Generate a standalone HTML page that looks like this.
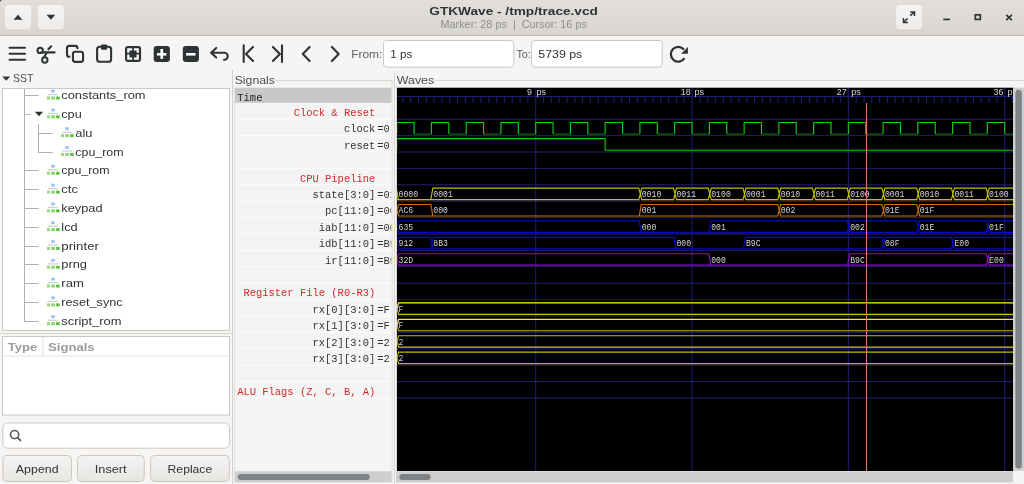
<!DOCTYPE html>
<html><head><meta charset="utf-8">
<style>
*{margin:0;padding:0}
html,body{width:1024px;height:484px;overflow:hidden;background:#f6f5f4}
svg{position:absolute;left:0;top:0;will-change:transform}
text{font-family:"Liberation Sans",sans-serif;white-space:pre}
.m{font-family:"Liberation Mono",monospace}
</style></head><body>
<svg width="1024" height="484" viewBox="0 0 1024 484" fill="#2e3436">
<defs>
<linearGradient id="hg" x1="0" y1="0" x2="0" y2="1"><stop offset="0" stop-color="#e2dfdb"/><stop offset="1" stop-color="#d9d5d1"/></linearGradient>
<linearGradient id="bg" x1="0" y1="0" x2="0" y2="1"><stop offset="0" stop-color="#f6f5f4"/><stop offset="1" stop-color="#edebe9"/></linearGradient>
<linearGradient id="btg" x1="0" y1="0" x2="0" y2="1"><stop offset="0" stop-color="#f4f3f2"/><stop offset="1" stop-color="#e8e6e3"/></linearGradient>
</defs>
<rect width="1024" height="484" fill="#f6f5f4"/>

<rect x="0" y="0" width="1024" height="35" fill="url(#hg)"/>
<rect x="0" y="35" width="1024" height="1" fill="#bfb8b1"/>
<path d="M0 0 H2.2 A2.2 2.2 0 0 0 0 2.2 Z" fill="#1a1a1a"/>
<rect x="5" y="5.6" width="26.2" height="25" rx="4" fill="#cfcac5" opacity="0.6"/>
<rect x="5" y="5" width="26.2" height="24.8" rx="4" fill="url(#bg)"/>
<rect x="37.8" y="5.6" width="26.2" height="25" rx="4" fill="#cfcac5" opacity="0.6"/>
<rect x="37.8" y="5" width="26.2" height="24.8" rx="4" fill="url(#bg)"/>
<rect x="896" y="5.6" width="26.2" height="25" rx="4" fill="#cfcac5" opacity="0.6"/>
<rect x="896" y="5" width="26.2" height="24.8" rx="4" fill="url(#bg)"/>
<path d="M13.5 19.7 L18 14.8 L22.5 19.7 Z" fill="#2e3436"/>
<path d="M46.5 14.8 L55.3 14.8 L50.9 19.7 Z" fill="#2e3436"/>
<g stroke="#2e3436" stroke-width="1.6" fill="none">
<path d="M910.3 15.8 L914.3 11.9" stroke-width="1.5"/><path d="M910.2 11.9 H914.5 V16.1" stroke-width="1.5"/>
<path d="M903.6 22.3 L907.6 18.5" stroke-width="1.5"/><path d="M903.5 18.1 V22.4 H907.9" stroke-width="1.5"/>
<path d="M943.3 19.4 H949.9" stroke-width="1.7"/>
<rect x="975.3" y="14.8" width="5" height="4.6" stroke-width="1.7"/>
<path d="M1006.2 14.8 L1011.9 20.2 M1011.9 14.8 L1006.2 20.2" stroke-width="1.6"/>
</g>
<text x="429.3" y="14.8" font-size="10.9" font-weight="bold" textLength="168.6" lengthAdjust="spacingAndGlyphs">GTKWave - /tmp/trace.vcd</text>
<text x="440.5" y="27.6" font-size="10.6" fill="#8b8e8f" textLength="146.4" lengthAdjust="spacingAndGlyphs">Marker: 28 ps  |  Cursor: 16 ps</text>
<g fill="none" stroke="#2e3436" stroke-width="2" stroke-linecap="round" stroke-linejoin="round">
<path d="M9.6 47.8 H25 M9.6 53.8 H25 M9.6 59.7 H25" stroke-linecap="round" stroke-width="2.1"/>
<circle cx="40.2" cy="50.4" r="2.7" stroke-width="2"/>
<circle cx="44.8" cy="60" r="2.7" stroke-width="2"/>
<path d="M41.5 52.4 H54.6" stroke-width="2.1"/>
<path d="M48.4 49.3 L51.2 46.3" stroke-width="2"/>
<path d="M43.8 57.2 L46.3 53.6" stroke-width="2"/>
<path d="M69.4 56.8 Q67 56.8 67 54.4 V48.3 Q67 45.9 69.4 45.9 H75.1 Q77.5 45.9 77.5 48.2" stroke-width="2.1"/>
<rect x="72.9" y="51.7" width="10.2" height="10.2" rx="2.4" stroke-width="2.1"/>
<rect x="97.1" y="46.8" width="14" height="15" rx="2.6" stroke-width="2.1"/>
<path d="M216.2 47.9 L211.1 52.7 L216.2 57.5 M211.5 52.7 H224.2 A3.55 3.55 0 0 1 224.2 59.8 H224" stroke-width="2.1"/>
<path d="M243.7 45.4 V61.9 M253 46.9 L246 53.9 L253 61" stroke-width="2.1"/>
<path d="M282 45.4 V61.9 M272.9 46.9 L279.9 53.9 L272.9 61" stroke-width="2.1"/>
<path d="M309.6 46.9 L302.8 53.9 L309.6 61" stroke-width="2.1"/>
<path d="M331.9 46.9 L338.7 53.9 L331.9 61" stroke-width="2.1"/>
<path d="M684.5 58.2 A7.4 7.4 0 1 1 684 49.6" stroke-width="2.3" stroke-linecap="butt"/>
</g>
<g fill="#2e3436">
<rect x="101" y="44.6" width="6.2" height="5.2" rx="1"/>
<rect x="125" y="46" width="16.1" height="15.9" rx="3"/>
<rect x="153.7" y="45.9" width="16.2" height="16.1" rx="3"/>
<rect x="182.8" y="45.9" width="16.1" height="16.1" rx="3"/>
<path d="M687.9 47 V53.7 H681.1 Z"/>
</g>
<g fill="#fff">
<path d="M127.2 48.2 H132.2 V50.4 H129.4 V52.7 H127.2 Z M133.9 48.2 H138.8 V52.7 H136.6 V50.4 H133.9 Z M127.2 54.4 H129.4 V57.4 H132.2 V59.7 H127.2 Z M138.8 54.4 V59.7 H133.9 V57.4 H136.6 V54.4 Z"/>
<rect x="157" y="53" width="9.4" height="2.6"/>
<rect x="160.4" y="49" width="2.7" height="9.9"/>
<rect x="186.1" y="53" width="9.4" height="2.6"/>
</g>
<text x="351.2" y="57.9" font-size="11" fill="#5d6163" textLength="31.2" lengthAdjust="spacingAndGlyphs">From:</text>
<rect x="383.5" y="40.5" width="130.3" height="26.6" rx="3" fill="#fff" stroke="#cdc7c2"/>
<text x="390.3" y="57.9" font-size="11" textLength="22" lengthAdjust="spacingAndGlyphs">1 ps</text>
<text x="516.4" y="57.9" font-size="11" fill="#5d6163" textLength="14.4" lengthAdjust="spacingAndGlyphs">To:</text>
<rect x="531.6" y="40.5" width="130.6" height="26.6" rx="3" fill="#fff" stroke="#cdc7c2"/>
<text x="538.3" y="57.9" font-size="11" textLength="44" lengthAdjust="spacingAndGlyphs">5739 ps</text>
<path d="M2.2 76.6 H10.2 L6.2 80.8 Z" fill="#2e3436"/>
<text x="13" y="82.2" font-size="11" fill="#4b4f51" textLength="20.6" lengthAdjust="spacingAndGlyphs">SST</text>
<rect x="2.5" y="88.5" width="227" height="242" fill="#fff" stroke="#cdc7c2"/>
<rect x="24" y="89" width="1" height="233.0" fill="#b0b0b0"/>
<rect x="24" y="95.0" width="14.6" height="1" fill="#b0b0b0"/>
<g transform="translate(47,89.65)"><rect x="4.1" y="0" width="3.8" height="2.9" fill="#a3c6f0"/><rect x="1" y="4.4" width="9.9" height="1.2" fill="#cfcfcf"/><rect x="0" y="6.9" width="3" height="3" fill="#9ad97f"/><rect x="4.3" y="6.9" width="3.6" height="3" fill="#8ad56e"/><rect x="9.1" y="6.9" width="3.6" height="3" fill="#5fbf42"/></g>
<rect x="24" y="114.0" width="6.5" height="1" fill="#b0b0b0"/>
<path d="M34.8 111.8 H43.2 L39 116.2 Z" fill="#2e3436"/>
<g transform="translate(47,108.45)"><rect x="4.1" y="0" width="3.8" height="2.9" fill="#a3c6f0"/><rect x="1" y="4.4" width="9.9" height="1.2" fill="#cfcfcf"/><rect x="0" y="6.9" width="3" height="3" fill="#9ad97f"/><rect x="4.3" y="6.9" width="3.6" height="3" fill="#8ad56e"/><rect x="9.1" y="6.9" width="3.6" height="3" fill="#5fbf42"/></g>
<rect x="38" y="133.0" width="14.7" height="1" fill="#b0b0b0"/>
<g transform="translate(61,127.25000000000001)"><rect x="4.1" y="0" width="3.8" height="2.9" fill="#a3c6f0"/><rect x="1" y="4.4" width="9.9" height="1.2" fill="#cfcfcf"/><rect x="0" y="6.9" width="3" height="3" fill="#9ad97f"/><rect x="4.3" y="6.9" width="3.6" height="3" fill="#8ad56e"/><rect x="9.1" y="6.9" width="3.6" height="3" fill="#5fbf42"/></g>
<rect x="38" y="152.0" width="14.7" height="1" fill="#b0b0b0"/>
<g transform="translate(61,146.05)"><rect x="4.1" y="0" width="3.8" height="2.9" fill="#a3c6f0"/><rect x="1" y="4.4" width="9.9" height="1.2" fill="#cfcfcf"/><rect x="0" y="6.9" width="3" height="3" fill="#9ad97f"/><rect x="4.3" y="6.9" width="3.6" height="3" fill="#8ad56e"/><rect x="9.1" y="6.9" width="3.6" height="3" fill="#5fbf42"/></g>
<rect x="24" y="170.0" width="14.6" height="1" fill="#b0b0b0"/>
<g transform="translate(47,164.85)"><rect x="4.1" y="0" width="3.8" height="2.9" fill="#a3c6f0"/><rect x="1" y="4.4" width="9.9" height="1.2" fill="#cfcfcf"/><rect x="0" y="6.9" width="3" height="3" fill="#9ad97f"/><rect x="4.3" y="6.9" width="3.6" height="3" fill="#8ad56e"/><rect x="9.1" y="6.9" width="3.6" height="3" fill="#5fbf42"/></g>
<rect x="24" y="189.0" width="14.6" height="1" fill="#b0b0b0"/>
<g transform="translate(47,183.64999999999998)"><rect x="4.1" y="0" width="3.8" height="2.9" fill="#a3c6f0"/><rect x="1" y="4.4" width="9.9" height="1.2" fill="#cfcfcf"/><rect x="0" y="6.9" width="3" height="3" fill="#9ad97f"/><rect x="4.3" y="6.9" width="3.6" height="3" fill="#8ad56e"/><rect x="9.1" y="6.9" width="3.6" height="3" fill="#5fbf42"/></g>
<rect x="24" y="208.0" width="14.6" height="1" fill="#b0b0b0"/>
<g transform="translate(47,202.45)"><rect x="4.1" y="0" width="3.8" height="2.9" fill="#a3c6f0"/><rect x="1" y="4.4" width="9.9" height="1.2" fill="#cfcfcf"/><rect x="0" y="6.9" width="3" height="3" fill="#9ad97f"/><rect x="4.3" y="6.9" width="3.6" height="3" fill="#8ad56e"/><rect x="9.1" y="6.9" width="3.6" height="3" fill="#5fbf42"/></g>
<rect x="24" y="227.0" width="14.6" height="1" fill="#b0b0b0"/>
<g transform="translate(47,221.25)"><rect x="4.1" y="0" width="3.8" height="2.9" fill="#a3c6f0"/><rect x="1" y="4.4" width="9.9" height="1.2" fill="#cfcfcf"/><rect x="0" y="6.9" width="3" height="3" fill="#9ad97f"/><rect x="4.3" y="6.9" width="3.6" height="3" fill="#8ad56e"/><rect x="9.1" y="6.9" width="3.6" height="3" fill="#5fbf42"/></g>
<rect x="24" y="246.0" width="14.6" height="1" fill="#b0b0b0"/>
<g transform="translate(47,240.05)"><rect x="4.1" y="0" width="3.8" height="2.9" fill="#a3c6f0"/><rect x="1" y="4.4" width="9.9" height="1.2" fill="#cfcfcf"/><rect x="0" y="6.9" width="3" height="3" fill="#9ad97f"/><rect x="4.3" y="6.9" width="3.6" height="3" fill="#8ad56e"/><rect x="9.1" y="6.9" width="3.6" height="3" fill="#5fbf42"/></g>
<rect x="24" y="264.0" width="14.6" height="1" fill="#b0b0b0"/>
<g transform="translate(47,258.85)"><rect x="4.1" y="0" width="3.8" height="2.9" fill="#a3c6f0"/><rect x="1" y="4.4" width="9.9" height="1.2" fill="#cfcfcf"/><rect x="0" y="6.9" width="3" height="3" fill="#9ad97f"/><rect x="4.3" y="6.9" width="3.6" height="3" fill="#8ad56e"/><rect x="9.1" y="6.9" width="3.6" height="3" fill="#5fbf42"/></g>
<rect x="24" y="283.0" width="14.6" height="1" fill="#b0b0b0"/>
<g transform="translate(47,277.65)"><rect x="4.1" y="0" width="3.8" height="2.9" fill="#a3c6f0"/><rect x="1" y="4.4" width="9.9" height="1.2" fill="#cfcfcf"/><rect x="0" y="6.9" width="3" height="3" fill="#9ad97f"/><rect x="4.3" y="6.9" width="3.6" height="3" fill="#8ad56e"/><rect x="9.1" y="6.9" width="3.6" height="3" fill="#5fbf42"/></g>
<rect x="24" y="302.0" width="14.6" height="1" fill="#b0b0b0"/>
<g transform="translate(47,296.45)"><rect x="4.1" y="0" width="3.8" height="2.9" fill="#a3c6f0"/><rect x="1" y="4.4" width="9.9" height="1.2" fill="#cfcfcf"/><rect x="0" y="6.9" width="3" height="3" fill="#9ad97f"/><rect x="4.3" y="6.9" width="3.6" height="3" fill="#8ad56e"/><rect x="9.1" y="6.9" width="3.6" height="3" fill="#5fbf42"/></g>
<rect x="24" y="321.0" width="14.6" height="1" fill="#b0b0b0"/>
<g transform="translate(47,315.25)"><rect x="4.1" y="0" width="3.8" height="2.9" fill="#a3c6f0"/><rect x="1" y="4.4" width="9.9" height="1.2" fill="#cfcfcf"/><rect x="0" y="6.9" width="3" height="3" fill="#9ad97f"/><rect x="4.3" y="6.9" width="3.6" height="3" fill="#8ad56e"/><rect x="9.1" y="6.9" width="3.6" height="3" fill="#5fbf42"/></g>
<text x="61.3" y="99.15" font-size="11.6" textLength="84.2" lengthAdjust="spacingAndGlyphs">constants_rom</text>
<text x="61.3" y="117.95" font-size="11.6" textLength="20.4" lengthAdjust="spacingAndGlyphs">cpu</text>
<text x="75.3" y="136.75" font-size="11.6" textLength="17.2" lengthAdjust="spacingAndGlyphs">alu</text>
<text x="75.3" y="155.55" font-size="11.6" textLength="48.3" lengthAdjust="spacingAndGlyphs">cpu_rom</text>
<text x="61.3" y="174.35" font-size="11.6" textLength="48.3" lengthAdjust="spacingAndGlyphs">cpu_rom</text>
<text x="61.3" y="193.15" font-size="11.6" textLength="16.6" lengthAdjust="spacingAndGlyphs">ctc</text>
<text x="61.3" y="211.95" font-size="11.6" textLength="41.2" lengthAdjust="spacingAndGlyphs">keypad</text>
<text x="61.3" y="230.75" font-size="11.6" textLength="16.3" lengthAdjust="spacingAndGlyphs">lcd</text>
<text x="61.3" y="249.55" font-size="11.6" textLength="37.7" lengthAdjust="spacingAndGlyphs">printer</text>
<text x="61.3" y="268.35" font-size="11.6" textLength="25.7" lengthAdjust="spacingAndGlyphs">prng</text>
<text x="61.3" y="287.15" font-size="11.6" textLength="22.5" lengthAdjust="spacingAndGlyphs">ram</text>
<text x="61.3" y="305.95" font-size="11.6" textLength="61.4" lengthAdjust="spacingAndGlyphs">reset_sync</text>
<text x="61.3" y="324.75" font-size="11.6" textLength="60.2" lengthAdjust="spacingAndGlyphs">script_rom</text>
<rect x="38" y="124" width="1" height="29" fill="#b0b0b0"/>
<rect x="0" y="333" width="232" height="1" fill="#d8d4cf"/>
<rect x="232" y="70" width="1" height="414" fill="#d3cfca"/>
<rect x="2.5" y="336.5" width="227" height="78.5" fill="#fff" stroke="#cdc7c2"/>
<rect x="3" y="355.5" width="226" height="1" fill="#e4e1de"/>
<rect x="42.3" y="337" width="1" height="19" fill="#e4e1de"/>
<text x="7.8" y="350.6" font-size="11" font-weight="bold" fill="#9a9c9d" textLength="29.6" lengthAdjust="spacingAndGlyphs">Type</text>
<text x="48" y="350.6" font-size="11" font-weight="bold" fill="#9a9c9d" textLength="46.6" lengthAdjust="spacingAndGlyphs">Signals</text>
<rect x="2.8" y="423" width="226.8" height="25.2" rx="5" fill="#fff" stroke="#cdc7c2"/>
<circle cx="14.6" cy="434.6" r="4.1" fill="none" stroke="#555a5c" stroke-width="1.6"/>
<path d="M17.6 437.6 L20.4 440.3" stroke="#555a5c" stroke-width="1.8" stroke-linecap="round"/>
<rect x="2.8" y="455.5" width="68.7" height="26" rx="4" fill="url(#btg)" stroke="#cdc7c2"/>
<text x="15.8" y="473.2" font-size="11" textLength="42.8" lengthAdjust="spacingAndGlyphs">Append</text>
<rect x="77.5" y="455.5" width="66.7" height="26" rx="4" fill="url(#btg)" stroke="#cdc7c2"/>
<text x="94.8" y="473.2" font-size="11" textLength="31.8" lengthAdjust="spacingAndGlyphs">Insert</text>
<rect x="150.6" y="455.5" width="78.8" height="26" rx="4" fill="url(#btg)" stroke="#cdc7c2"/>
<text x="167.6" y="473.2" font-size="11" textLength="44.6" lengthAdjust="spacingAndGlyphs">Replace</text>
<text x="234.7" y="83.8" font-size="11" fill="#4a4e50" textLength="40.2" lengthAdjust="spacingAndGlyphs">Signals</text>
<rect x="275" y="80" width="117.5" height="1" fill="#d9d5d0"/>
<rect x="234" y="86" width="1" height="397" fill="#e4e0dc"/>
<rect x="391.5" y="80" width="1" height="403" fill="#dcd8d3"/>
<rect x="235" y="87.7" width="156.5" height="383.3" fill="#f4f4f4"/>
<rect x="235" y="87.7" width="156.5" height="15.1" fill="#c8c8c8"/>
<text x="237.3" y="100.9" font-size="11.7" class="m" fill="#1e2224" textLength="25.12" lengthAdjust="spacingAndGlyphs">Time</text>
<rect x="235" y="118.6" width="156.5" height="1.1" fill="#fcfcfc"/>
<rect x="235" y="135.0" width="156.5" height="1.1" fill="#fcfcfc"/>
<rect x="235" y="151.4" width="156.5" height="1.1" fill="#fcfcfc"/>
<rect x="235" y="167.8" width="156.5" height="1.1" fill="#fcfcfc"/>
<rect x="235" y="184.2" width="156.5" height="1.1" fill="#fcfcfc"/>
<rect x="235" y="200.6" width="156.5" height="1.1" fill="#fcfcfc"/>
<rect x="235" y="217.0" width="156.5" height="1.1" fill="#fcfcfc"/>
<rect x="235" y="233.4" width="156.5" height="1.1" fill="#fcfcfc"/>
<rect x="235" y="249.8" width="156.5" height="1.1" fill="#fcfcfc"/>
<rect x="235" y="266.2" width="156.5" height="1.1" fill="#fcfcfc"/>
<rect x="235" y="282.6" width="156.5" height="1.1" fill="#fcfcfc"/>
<rect x="235" y="299.0" width="156.5" height="1.1" fill="#fcfcfc"/>
<rect x="235" y="315.4" width="156.5" height="1.1" fill="#fcfcfc"/>
<rect x="235" y="331.8" width="156.5" height="1.1" fill="#fcfcfc"/>
<rect x="235" y="348.2" width="156.5" height="1.1" fill="#fcfcfc"/>
<rect x="235" y="364.6" width="156.5" height="1.1" fill="#fcfcfc"/>
<rect x="235" y="381.0" width="156.5" height="1.1" fill="#fcfcfc"/>
<rect x="235" y="397.4" width="156.5" height="1.1" fill="#fcfcfc"/>
<clipPath id="sc"><rect x="235" y="87" width="156.3" height="384"/></clipPath><g clip-path="url(#sc)">
<text x="375.3" y="115.95" font-size="11.7" class="m" fill="#d42a2a" textLength="81.64" lengthAdjust="spacingAndGlyphs" text-anchor="end">Clock &amp; Reset</text>
<text x="375.3" y="132.35" font-size="11.7" class="m" textLength="31.40" lengthAdjust="spacingAndGlyphs" text-anchor="end">clock</text>
<text x="377.3" y="132.35" font-size="11.7" class="m" textLength="12.56" lengthAdjust="spacingAndGlyphs">=0</text>
<text x="375.3" y="148.75" font-size="11.7" class="m" textLength="31.40" lengthAdjust="spacingAndGlyphs" text-anchor="end">reset</text>
<text x="377.3" y="148.75" font-size="11.7" class="m" textLength="12.56" lengthAdjust="spacingAndGlyphs">=0</text>
<text x="375.3" y="181.55" font-size="11.7" class="m" fill="#d42a2a" textLength="75.36" lengthAdjust="spacingAndGlyphs" text-anchor="end">CPU Pipeline</text>
<text x="375.3" y="197.95" font-size="11.7" class="m" textLength="62.80" lengthAdjust="spacingAndGlyphs" text-anchor="end">state[3:0]</text>
<text x="377.3" y="197.95" font-size="11.7" class="m" textLength="31.40" lengthAdjust="spacingAndGlyphs">=0100</text>
<text x="375.3" y="214.35" font-size="11.7" class="m" textLength="50.24" lengthAdjust="spacingAndGlyphs" text-anchor="end">pc[11:0]</text>
<text x="377.3" y="214.35" font-size="11.7" class="m" textLength="25.12" lengthAdjust="spacingAndGlyphs">=002</text>
<text x="375.3" y="230.75" font-size="11.7" class="m" textLength="56.52" lengthAdjust="spacingAndGlyphs" text-anchor="end">iab[11:0]</text>
<text x="377.3" y="230.75" font-size="11.7" class="m" textLength="25.12" lengthAdjust="spacingAndGlyphs">=002</text>
<text x="375.3" y="247.15" font-size="11.7" class="m" textLength="56.52" lengthAdjust="spacingAndGlyphs" text-anchor="end">idb[11:0]</text>
<text x="377.3" y="247.15" font-size="11.7" class="m" textLength="25.12" lengthAdjust="spacingAndGlyphs">=B9C</text>
<text x="375.3" y="263.55" font-size="11.7" class="m" textLength="50.24" lengthAdjust="spacingAndGlyphs" text-anchor="end">ir[11:0]</text>
<text x="377.3" y="263.55" font-size="11.7" class="m" textLength="25.12" lengthAdjust="spacingAndGlyphs">=B9C</text>
<text x="375.3" y="296.35" font-size="11.7" class="m" fill="#d42a2a" textLength="131.88" lengthAdjust="spacingAndGlyphs" text-anchor="end">Register File (R0-R3)</text>
<text x="375.3" y="312.75" font-size="11.7" class="m" textLength="62.80" lengthAdjust="spacingAndGlyphs" text-anchor="end">rx[0][3:0]</text>
<text x="377.3" y="312.75" font-size="11.7" class="m" textLength="12.56" lengthAdjust="spacingAndGlyphs">=F</text>
<text x="375.3" y="329.15" font-size="11.7" class="m" textLength="62.80" lengthAdjust="spacingAndGlyphs" text-anchor="end">rx[1][3:0]</text>
<text x="377.3" y="329.15" font-size="11.7" class="m" textLength="12.56" lengthAdjust="spacingAndGlyphs">=F</text>
<text x="375.3" y="345.55" font-size="11.7" class="m" textLength="62.80" lengthAdjust="spacingAndGlyphs" text-anchor="end">rx[2][3:0]</text>
<text x="377.3" y="345.55" font-size="11.7" class="m" textLength="12.56" lengthAdjust="spacingAndGlyphs">=2</text>
<text x="375.3" y="361.95" font-size="11.7" class="m" textLength="62.80" lengthAdjust="spacingAndGlyphs" text-anchor="end">rx[3][3:0]</text>
<text x="377.3" y="361.95" font-size="11.7" class="m" textLength="12.56" lengthAdjust="spacingAndGlyphs">=2</text>
<text x="375.3" y="394.75" font-size="11.7" class="m" fill="#d42a2a" textLength="138.16" lengthAdjust="spacingAndGlyphs" text-anchor="end">ALU Flags (Z, C, B, A)</text>
</g>
<rect x="235" y="471.3" width="156.5" height="11.1" fill="#cecece"/>
<rect x="237.8" y="474" width="132" height="5.9" rx="2.95" fill="#7e8284"/>
<text x="396.8" y="83.7" font-size="11" fill="#4a4e50" textLength="37.4" lengthAdjust="spacingAndGlyphs">Waves</text>
<rect x="434.5" y="80" width="590" height="1" fill="#d9d5d0"/>
<rect x="394" y="71" width="1" height="413" fill="#d8d4cf"/>
<rect x="396" y="86" width="1" height="397" fill="#dcd8d3"/>
<rect x="397" y="87.7" width="616" height="383.3" fill="#000"/>
<clipPath id="wc"><rect x="397" y="87.7" width="616" height="383.3"/></clipPath><g clip-path="url(#wc)">
<rect x="397" y="95.9" width="616" height="1.2" fill="#1c1c70"/>
<path d="M402.82 97V102.8 M410.64 97V102.8 M418.45 97V102.8 M426.27 97V102.8 M434.09 97V102.8 M441.90 97V102.8 M449.72 97V102.8 M457.54 97V102.8 M465.35 97V102.8 M473.17 97V102.8 M480.98 97V102.8 M488.80 97V102.8 M496.62 97V102.8 M504.43 97V102.8 M512.25 97V102.8 M520.07 97V102.8 M527.88 97V102.8 M543.52 97V102.8 M551.33 97V102.8 M559.15 97V102.8 M566.97 97V102.8 M574.78 97V102.8 M582.60 97V102.8 M590.42 97V102.8 M598.23 97V102.8 M606.05 97V102.8 M613.87 97V102.8 M621.68 97V102.8 M629.50 97V102.8 M637.31 97V102.8 M645.13 97V102.8 M652.95 97V102.8 M660.76 97V102.8 M668.58 97V102.8 M676.40 97V102.8 M684.21 97V102.8 M699.85 97V102.8 M707.66 97V102.8 M715.48 97V102.8 M723.30 97V102.8 M731.11 97V102.8 M738.93 97V102.8 M746.75 97V102.8 M754.56 97V102.8 M762.38 97V102.8 M770.20 97V102.8 M778.01 97V102.8 M785.83 97V102.8 M793.64 97V102.8 M801.46 97V102.8 M809.28 97V102.8 M817.09 97V102.8 M824.91 97V102.8 M832.73 97V102.8 M840.54 97V102.8 M856.18 97V102.8 M863.99 97V102.8 M871.81 97V102.8 M879.63 97V102.8 M887.44 97V102.8 M895.26 97V102.8 M903.08 97V102.8 M910.89 97V102.8 M918.71 97V102.8 M926.53 97V102.8 M934.34 97V102.8 M942.16 97V102.8 M949.97 97V102.8 M957.79 97V102.8 M965.61 97V102.8 M973.42 97V102.8 M981.24 97V102.8 M989.06 97V102.8 M996.87 97V102.8 M1012.51 97V102.8" stroke="#1c1c70" stroke-width="1.1"/>
<rect x="535.15" y="87.7" width="1.1" height="383.3" fill="#1c1c70"/>
<rect x="691.48" y="87.7" width="1.1" height="383.3" fill="#1c1c70"/>
<rect x="847.81" y="87.7" width="1.1" height="383.3" fill="#1c1c70"/>
<rect x="1004.14" y="87.7" width="1.1" height="383.3" fill="#1c1c70"/>
<text x="532.0" y="94.9" font-size="9.4" fill="#d6d6d6" textLength="4.9" lengthAdjust="spacingAndGlyphs" text-anchor="end">9</text>
<text x="536.4" y="94.9" font-size="9.4" fill="#d6d6d6" textLength="9.6" lengthAdjust="spacingAndGlyphs">ps</text>
<text x="690.6" y="94.9" font-size="9.4" fill="#d6d6d6" textLength="9.8" lengthAdjust="spacingAndGlyphs" text-anchor="end">18</text>
<text x="694.5" y="94.9" font-size="9.4" fill="#d6d6d6" textLength="9.6" lengthAdjust="spacingAndGlyphs">ps</text>
<text x="846.6" y="94.9" font-size="9.4" fill="#d6d6d6" textLength="9.8" lengthAdjust="spacingAndGlyphs" text-anchor="end">27</text>
<text x="851.3" y="94.9" font-size="9.4" fill="#d6d6d6" textLength="9.6" lengthAdjust="spacingAndGlyphs">ps</text>
<text x="1003.4" y="94.9" font-size="9.4" fill="#d6d6d6" textLength="9.8" lengthAdjust="spacingAndGlyphs" text-anchor="end">36</text>
<text x="1007.5" y="94.9" font-size="9.4" fill="#d6d6d6" textLength="9.6" lengthAdjust="spacingAndGlyphs">ps</text>
<rect x="397" y="118.65" width="616" height="1.1" fill="#1e1e66"/>
<rect x="397" y="135.05" width="616" height="1.1" fill="#1e1e66"/>
<rect x="397" y="151.45" width="616" height="1.1" fill="#1e1e66"/>
<rect x="397" y="167.85" width="616" height="1.1" fill="#1e1e66"/>
<rect x="397" y="184.25" width="616" height="1.1" fill="#1e1e66"/>
<rect x="397" y="200.65" width="616" height="1.1" fill="#1e1e66"/>
<rect x="397" y="217.05" width="616" height="1.1" fill="#1e1e66"/>
<rect x="397" y="233.45" width="616" height="1.1" fill="#1e1e66"/>
<rect x="397" y="249.85" width="616" height="1.1" fill="#1e1e66"/>
<rect x="397" y="266.25" width="616" height="1.1" fill="#1e1e66"/>
<rect x="397" y="282.65" width="616" height="1.1" fill="#1e1e66"/>
<rect x="397" y="299.05" width="616" height="1.1" fill="#1e1e66"/>
<rect x="397" y="315.45" width="616" height="1.1" fill="#1e1e66"/>
<rect x="397" y="331.85" width="616" height="1.1" fill="#1e1e66"/>
<rect x="397" y="348.25" width="616" height="1.1" fill="#1e1e66"/>
<rect x="397" y="364.65" width="616" height="1.1" fill="#1e1e66"/>
<rect x="397" y="381.05" width="616" height="1.1" fill="#1e1e66"/>
<rect x="397" y="397.45" width="616" height="1.1" fill="#1e1e66"/>
<path d="M414.11 134.10 H431.48 M448.85 134.10 H466.22 M483.59 134.10 H500.96 M518.33 134.10 H535.70 M553.07 134.10 H570.44 M587.81 134.10 H605.18 M622.55 134.10 H639.92 M657.29 134.10 H674.66 M692.03 134.10 H709.40 M726.77 134.10 H744.14 M761.51 134.10 H778.88 M796.25 134.10 H813.62 M830.99 134.10 H848.36 M865.73 134.10 H883.10 M900.47 134.10 H917.84 M935.21 134.10 H952.58 M969.95 134.10 H987.32 M1004.69 134.10 H1022.06 M1039.43 134.10 H1056.80" fill="none" stroke="#0a640a" stroke-width="1.2"/>
<path d="M396.74 134.10 V122.45 H414.11 V134.10 M431.48 134.10 V122.45 H448.85 V134.10 M466.22 134.10 V122.45 H483.59 V134.10 M500.96 134.10 V122.45 H518.33 V134.10 M535.70 134.10 V122.45 H553.07 V134.10 M570.44 134.10 V122.45 H587.81 V134.10 M605.18 134.10 V122.45 H622.55 V134.10 M639.92 134.10 V122.45 H657.29 V134.10 M674.66 134.10 V122.45 H692.03 V134.10 M709.40 134.10 V122.45 H726.77 V134.10 M744.14 134.10 V122.45 H761.51 V134.10 M778.88 134.10 V122.45 H796.25 V134.10 M813.62 134.10 V122.45 H830.99 V134.10 M848.36 134.10 V122.45 H865.73 V134.10 M883.10 134.10 V122.45 H900.47 V134.10 M917.84 134.10 V122.45 H935.21 V134.10 M952.58 134.10 V122.45 H969.95 V134.10 M987.32 134.10 V122.45 H1004.69 V134.10 M1022.06 134.10 V122.45 H1039.43 V134.10 M1056.80 134.10 V122.45 H1074.17 V134.10" fill="none" stroke="#12cc12" stroke-width="1.15"/>
<path d="M605.18 150.40 H1100" fill="none" stroke="#0c9c0c" stroke-width="1.2"/>
<path d="M396.74 150.40 V138.55 H605.18 V150.40" fill="none" stroke="#12cc12" stroke-width="1.15"/>
<path d="M396.34 188.10 L398.34 199.55 M397.09 199.55 H431.83 M430.83 199.55 L432.83 188.10 H638.77 L640.27 193.83 M431.83 199.55 H638.77 L640.27 193.83 M640.27 193.83 L641.77 188.10 H673.51 L675.01 193.83 M640.27 193.83 L641.77 199.55 H673.51 L675.01 193.83 M675.01 193.83 L676.51 188.10 H708.25 L709.75 193.83 M675.01 193.83 L676.51 199.55 H708.25 L709.75 193.83 M709.75 193.83 L711.25 188.10 H742.99 L744.49 193.83 M709.75 193.83 L711.25 199.55 H742.99 L744.49 193.83 M744.49 193.83 L745.99 188.10 H777.73 L779.23 193.83 M744.49 193.83 L745.99 199.55 H777.73 L779.23 193.83 M779.23 193.83 L780.73 188.10 H812.47 L813.97 193.83 M779.23 193.83 L780.73 199.55 H812.47 L813.97 193.83 M813.97 193.83 L815.47 188.10 H847.21 L848.71 193.83 M813.97 193.83 L815.47 199.55 H847.21 L848.71 193.83 M848.71 193.83 L850.21 188.10 H881.95 L883.45 193.83 M848.71 193.83 L850.21 199.55 H881.95 L883.45 193.83 M883.45 193.83 L884.95 188.10 H916.69 L918.19 193.83 M883.45 193.83 L884.95 199.55 H916.69 L918.19 193.83 M918.19 193.83 L919.69 188.10 H951.43 L952.93 193.83 M918.19 193.83 L919.69 199.55 H951.43 L952.93 193.83 M952.93 193.83 L954.43 188.10 H986.17 L987.67 193.83 M952.93 193.83 L954.43 199.55 H986.17 L987.67 193.83 M987.67 193.83 L989.17 188.10 H1098.50 L1100.00 193.83 M987.67 193.83 L989.17 199.55 H1098.50 L1100.00 193.83" fill="none" stroke="#c0c000" stroke-width="1.15"/>
<text x="398.54" y="197.00" font-size="8.6" class="m" fill="#d4d4d4" textLength="19.6" lengthAdjust="spacingAndGlyphs">0000</text>
<text x="433.28" y="197.00" font-size="8.6" class="m" fill="#d4d4d4" textLength="19.6" lengthAdjust="spacingAndGlyphs">0001</text>
<text x="641.72" y="197.00" font-size="8.6" class="m" fill="#d4d4d4" textLength="19.6" lengthAdjust="spacingAndGlyphs">0010</text>
<text x="676.46" y="197.00" font-size="8.6" class="m" fill="#d4d4d4" textLength="19.6" lengthAdjust="spacingAndGlyphs">0011</text>
<text x="711.20" y="197.00" font-size="8.6" class="m" fill="#d4d4d4" textLength="19.6" lengthAdjust="spacingAndGlyphs">0100</text>
<text x="745.94" y="197.00" font-size="8.6" class="m" fill="#d4d4d4" textLength="19.6" lengthAdjust="spacingAndGlyphs">0001</text>
<text x="780.68" y="197.00" font-size="8.6" class="m" fill="#d4d4d4" textLength="19.6" lengthAdjust="spacingAndGlyphs">0010</text>
<text x="815.42" y="197.00" font-size="8.6" class="m" fill="#d4d4d4" textLength="19.6" lengthAdjust="spacingAndGlyphs">0011</text>
<text x="850.16" y="197.00" font-size="8.6" class="m" fill="#d4d4d4" textLength="19.6" lengthAdjust="spacingAndGlyphs">0100</text>
<text x="884.90" y="197.00" font-size="8.6" class="m" fill="#d4d4d4" textLength="19.6" lengthAdjust="spacingAndGlyphs">0001</text>
<text x="919.64" y="197.00" font-size="8.6" class="m" fill="#d4d4d4" textLength="19.6" lengthAdjust="spacingAndGlyphs">0010</text>
<text x="954.38" y="197.00" font-size="8.6" class="m" fill="#d4d4d4" textLength="19.6" lengthAdjust="spacingAndGlyphs">0011</text>
<text x="989.12" y="197.00" font-size="8.6" class="m" fill="#d4d4d4" textLength="19.6" lengthAdjust="spacingAndGlyphs">0100</text>
<path d="M397.09 210.22 L398.59 204.50 H430.83 L432.83 215.95 M397.09 210.22 L398.59 215.95 H431.83 M431.83 215.95 H640.27 M639.27 215.95 L641.27 204.50 H777.73 L779.23 210.22 M640.27 215.95 H777.73 L779.23 210.22 M779.23 210.22 L780.73 204.50 H881.95 L883.45 210.22 M779.23 210.22 L780.73 215.95 H881.95 L883.45 210.22 M883.45 210.22 L884.95 204.50 H916.69 L918.19 210.22 M883.45 210.22 L884.95 215.95 H916.69 L918.19 210.22 M918.19 210.22 L919.69 204.50 H1098.50 L1100.00 210.22 M918.19 210.22 L919.69 215.95 H1098.50 L1100.00 210.22" fill="none" stroke="#cc6c10" stroke-width="1.15"/>
<text x="398.54" y="213.40" font-size="8.6" class="m" fill="#d4d4d4" textLength="14.7" lengthAdjust="spacingAndGlyphs">AC6</text>
<text x="433.28" y="213.40" font-size="8.6" class="m" fill="#d4d4d4" textLength="14.7" lengthAdjust="spacingAndGlyphs">000</text>
<text x="641.72" y="213.40" font-size="8.6" class="m" fill="#d4d4d4" textLength="14.7" lengthAdjust="spacingAndGlyphs">001</text>
<text x="780.68" y="213.40" font-size="8.6" class="m" fill="#d4d4d4" textLength="14.7" lengthAdjust="spacingAndGlyphs">002</text>
<text x="884.90" y="213.40" font-size="8.6" class="m" fill="#d4d4d4" textLength="14.7" lengthAdjust="spacingAndGlyphs">01E</text>
<text x="919.64" y="213.40" font-size="8.6" class="m" fill="#d4d4d4" textLength="14.7" lengthAdjust="spacingAndGlyphs">01F</text>
<path d="M397.09 226.62 L398.59 220.90 H639.27 L641.27 232.35 M397.09 226.62 L398.59 232.35 H640.27 M640.27 232.35 H709.75 M708.75 232.35 L710.75 220.90 H847.21 L848.71 226.62 M709.75 232.35 H847.21 L848.71 226.62 M848.71 226.62 L850.21 220.90 H916.69 L918.19 226.62 M848.71 226.62 L850.21 232.35 H916.69 L918.19 226.62 M918.19 226.62 L919.69 220.90 H986.17 L987.67 226.62 M918.19 226.62 L919.69 232.35 H986.17 L987.67 226.62 M987.67 226.62 L989.17 220.90 H1098.50 L1100.00 226.62 M987.67 226.62 L989.17 232.35 H1098.50 L1100.00 226.62" fill="none" stroke="#0808c8" stroke-width="1.15"/>
<text x="398.54" y="229.80" font-size="8.6" class="m" fill="#d4d4d4" textLength="14.7" lengthAdjust="spacingAndGlyphs">635</text>
<text x="641.72" y="229.80" font-size="8.6" class="m" fill="#d4d4d4" textLength="14.7" lengthAdjust="spacingAndGlyphs">000</text>
<text x="711.20" y="229.80" font-size="8.6" class="m" fill="#d4d4d4" textLength="14.7" lengthAdjust="spacingAndGlyphs">001</text>
<text x="850.16" y="229.80" font-size="8.6" class="m" fill="#d4d4d4" textLength="14.7" lengthAdjust="spacingAndGlyphs">002</text>
<text x="919.64" y="229.80" font-size="8.6" class="m" fill="#d4d4d4" textLength="14.7" lengthAdjust="spacingAndGlyphs">01E</text>
<text x="989.12" y="229.80" font-size="8.6" class="m" fill="#d4d4d4" textLength="14.7" lengthAdjust="spacingAndGlyphs">01F</text>
<path d="M397.09 243.03 L398.59 237.30 H430.33 L431.83 243.03 M397.09 243.03 L398.59 248.75 H430.33 L431.83 243.03 M431.83 243.03 L433.33 237.30 H674.01 L676.01 248.75 M431.83 243.03 L433.33 248.75 H675.01 M675.01 248.75 H744.49 M743.49 248.75 L745.49 237.30 H881.95 L883.45 243.03 M744.49 248.75 H881.95 L883.45 243.03 M883.45 243.03 L884.95 237.30 H951.43 L952.93 243.03 M883.45 243.03 L884.95 248.75 H951.43 L952.93 243.03 M952.93 243.03 L954.43 237.30 H1098.50 L1100.00 243.03 M952.93 243.03 L954.43 248.75 H1098.50 L1100.00 243.03" fill="none" stroke="#0808c8" stroke-width="1.15"/>
<text x="398.54" y="246.20" font-size="8.6" class="m" fill="#d4d4d4" textLength="14.7" lengthAdjust="spacingAndGlyphs">912</text>
<text x="433.28" y="246.20" font-size="8.6" class="m" fill="#d4d4d4" textLength="14.7" lengthAdjust="spacingAndGlyphs">8B3</text>
<text x="676.46" y="246.20" font-size="8.6" class="m" fill="#d4d4d4" textLength="14.7" lengthAdjust="spacingAndGlyphs">000</text>
<text x="745.94" y="246.20" font-size="8.6" class="m" fill="#d4d4d4" textLength="14.7" lengthAdjust="spacingAndGlyphs">B9C</text>
<text x="884.90" y="246.20" font-size="8.6" class="m" fill="#d4d4d4" textLength="14.7" lengthAdjust="spacingAndGlyphs">08F</text>
<text x="954.38" y="246.20" font-size="8.6" class="m" fill="#d4d4d4" textLength="14.7" lengthAdjust="spacingAndGlyphs">E00</text>
<path d="M397.09 259.42 L398.59 253.70 H708.75 L710.75 265.15 M397.09 259.42 L398.59 265.15 H709.75 M709.75 265.15 H848.71 M847.71 265.15 L849.71 253.70 H986.17 L987.67 259.42 M848.71 265.15 H986.17 L987.67 259.42 M987.67 259.42 L989.17 253.70 H1098.50 L1100.00 259.42 M987.67 259.42 L989.17 265.15 H1098.50 L1100.00 259.42" fill="none" stroke="#8610cc" stroke-width="1.15"/>
<text x="398.54" y="262.60" font-size="8.6" class="m" fill="#d4d4d4" textLength="14.7" lengthAdjust="spacingAndGlyphs">32D</text>
<text x="711.20" y="262.60" font-size="8.6" class="m" fill="#d4d4d4" textLength="14.7" lengthAdjust="spacingAndGlyphs">000</text>
<text x="850.16" y="262.60" font-size="8.6" class="m" fill="#d4d4d4" textLength="14.7" lengthAdjust="spacingAndGlyphs">B9C</text>
<text x="989.12" y="262.60" font-size="8.6" class="m" fill="#d4d4d4" textLength="14.7" lengthAdjust="spacingAndGlyphs">E00</text>
<path d="M397.09 308.62 L398.59 302.90 H1100" fill="none" stroke="#f8f800" stroke-width="1.35"/>
<path d="M397.09 308.62 L398.59 314.35 H1100" fill="none" stroke="#c8c800" stroke-width="1.15"/>
<text x="398.54" y="311.80" font-size="8.6" class="m" fill="#d4d4d4" textLength="4.9" lengthAdjust="spacingAndGlyphs">F</text>
<path d="M397.09 325.02 L398.59 319.30 H1100" fill="none" stroke="#f8f800" stroke-width="1.35"/>
<path d="M397.09 325.02 L398.59 330.75 H1100" fill="none" stroke="#c0c000" stroke-width="1.15"/>
<text x="398.54" y="328.20" font-size="8.6" class="m" fill="#d4d4d4" textLength="4.9" lengthAdjust="spacingAndGlyphs">F</text>
<path d="M397.09 341.42 L398.59 335.70 H1100" fill="none" stroke="#c0c000" stroke-width="1.15"/>
<path d="M397.09 341.42 L398.59 347.15 H1100" fill="none" stroke="#c8c800" stroke-width="1.15"/>
<text x="398.54" y="344.60" font-size="8.6" class="m" fill="#d4d4d4" textLength="4.9" lengthAdjust="spacingAndGlyphs">2</text>
<path d="M397.09 357.82 L398.59 352.10 H1100" fill="none" stroke="#c0c000" stroke-width="1.15"/>
<path d="M397.09 357.82 L398.59 363.55 H1100" fill="none" stroke="#b8b800" stroke-width="1.15"/>
<text x="398.54" y="361.00" font-size="8.6" class="m" fill="#d4d4d4" textLength="4.9" lengthAdjust="spacingAndGlyphs">2</text>
<rect x="866" y="103" width="1.1" height="368" fill="#e07470"/>
</g>
<rect x="1013" y="87.7" width="11" height="383.3" fill="#cfcfcf"/>
<rect x="1015.4" y="89.8" width="6.4" height="378.8" rx="3.2" fill="#7e8284"/>
<rect x="396" y="471.3" width="617" height="11.1" fill="#cecece"/>
<rect x="399.4" y="474" width="31.3" height="5.9" rx="2.95" fill="#7e8284"/>
</svg></body></html>
